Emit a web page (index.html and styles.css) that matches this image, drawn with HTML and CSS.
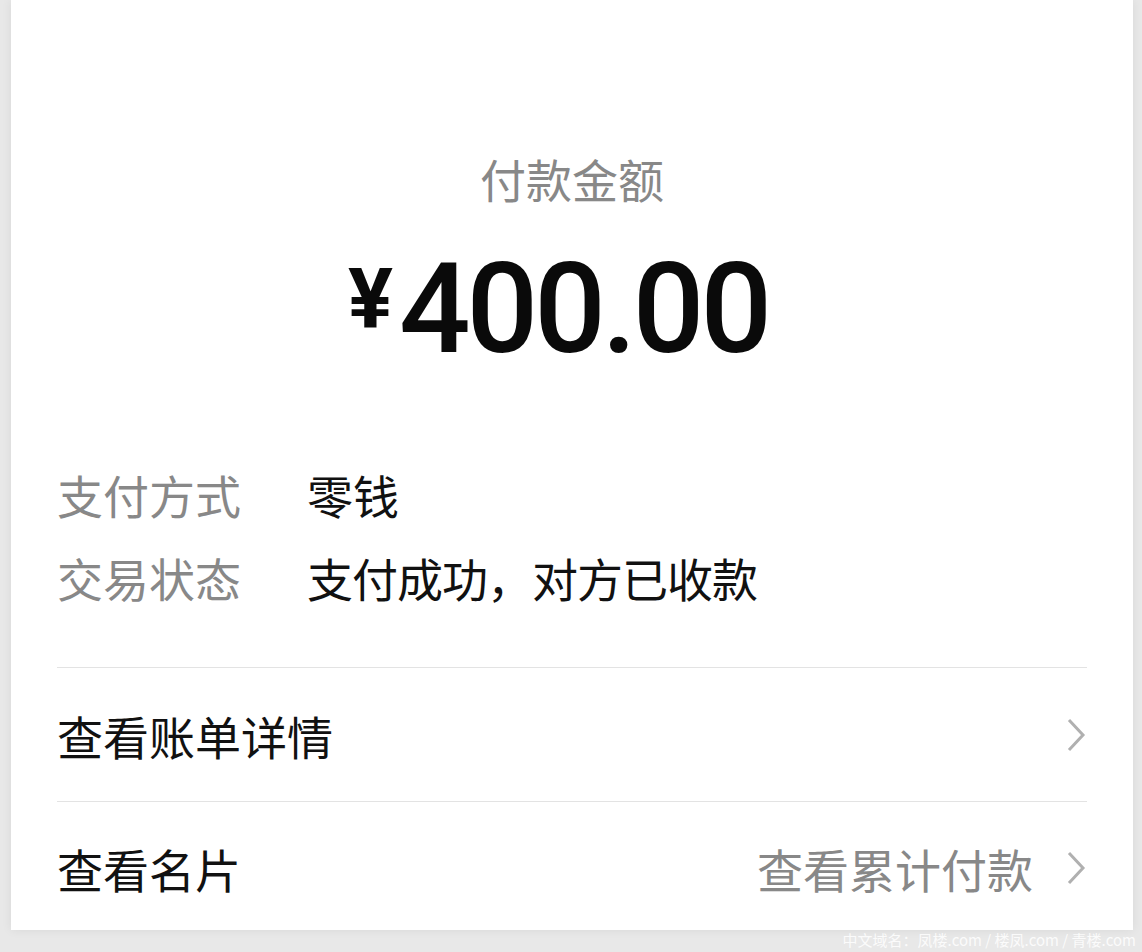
FILE: index.html
```html
<!DOCTYPE html>
<html lang="zh-CN">

    <head>
        <meta charset="UTF-8">
        <meta name="viewport" content="width=device-width, initial-scale=1.0">
        <title>付款详情</title>

        <link rel="stylesheet" href="styles.css">
    </head>

    <body>
        <div class="page">
            <div class="card">
                <div class="summary">
                    <p class="summary__label">付款金额</p>
                    <p class="summary__amount"><span class="yen">¥</span>400.00</p>
                </div>

                <div class="info">
                    <div class="info__row">
                        <span class="info__key">支付方式</span>
                        <span class="info__value">零钱</span>
                    </div>
                    <div class="info__row">
                        <span class="info__key">交易状态</span>
                        <span class="info__value info__value--tight">支付成功，对方已收款</span>
                    </div>
                </div>

                <a class="link link--first" href="#">
                    <span class="link__title">查看账单详情</span>
                    <svg class="chevron" width="22" height="36" viewBox="0 0 22 36">
                        <polyline points="4,3 18,18 4,33" />
                    </svg>
                </a>
                <a class="link link--last" href="#">
                    <span class="link__title">查看名片</span>
                    <span class="link__extra">查看累计付款</span>
                    <svg class="chevron" width="22" height="36" viewBox="0 0 22 36">
                        <polyline points="4,3 18,18 4,33" />
                    </svg>
                </a>
            </div>
            <div class="footer">中文域名：凤楼.com / 楼凤.com / 青楼.com</div>
        </div>
    </body>

</html>
```

FILE: styles.css
```css
* {
    margin: 0;
    padding: 0;
    box-sizing: border-box;
}

html {
    height: 100%;
}

body {
    min-height: 100%;
    background-color: #e8e8e8;
    font-family: "Noto Sans CJK SC", "Noto Sans", sans-serif;
    color: #111;
    overflow: hidden;
}

.page {
    display: flex;
    flex-direction: column;
    height: 952px;
}

.card {
    height: 930px;
    flex-shrink: 0;
    margin: 0 9px 0 11px;
    background: #fff;
    box-shadow: 0 0 10px rgba(0, 0, 0, 0.07);
    padding: 0 46px 0 46px;
    display: flex;
    flex-direction: column;
}

.summary {
    display: flex;
    flex-direction: column;
    align-items: center;
    padding-top: 148px;
}

.summary__label {
    font-size: 46px;
    line-height: 60px;
    color: #888;
}

.summary__amount {
    margin-top: 36px;
    padding-right: 28px;
    font-family: Roboto, "Liberation Sans", sans-serif;
    font-weight: 500;
    font-size: 126px;
    line-height: 130px;
    letter-spacing: -4px;
    display: flex;
    align-items: flex-start;
    color: #0a0a0a;
}

.yen {
    font-size: 84px;
    line-height: 84px;
    font-weight: 700;
    letter-spacing: 0;
    margin-top: 14px;
    margin-right: 6px;
}

.info {
    margin-top: 78px;
    display: flex;
    flex-direction: column;
}

.info__row {
    display: flex;
    height: 83px;
    align-items: center;
    font-size: 46px;
}

.info__key {
    width: 250px;
    color: #888;
}

.info__value {
    color: #111;
}

.info__value--tight {
    letter-spacing: -1px;
}

.link {
    display: flex;
    flex-shrink: 0;
    align-items: center;
    height: 134px;
    border-top: 1px solid #e3e3e3;
    text-decoration: none;
    color: #111;
    font-size: 46px;
}

.link--first {
    margin-top: 49px;
}

.link--last {
    height: 129px;
    padding-top: 4px;
}

.link__title {
    flex: 1;
}

.link__extra {
    color: #888;
    margin-right: 32px;
}

.chevron {
    fill: none;
    stroke: #b0b0b0;
    stroke-width: 3;
}

.footer {
    flex: 1;
    text-align: right;
    padding-right: 6px;
    font-size: 15px;
    line-height: 20px;
    white-space: nowrap;
    color: rgba(255, 255, 255, 0.85);
}
```
